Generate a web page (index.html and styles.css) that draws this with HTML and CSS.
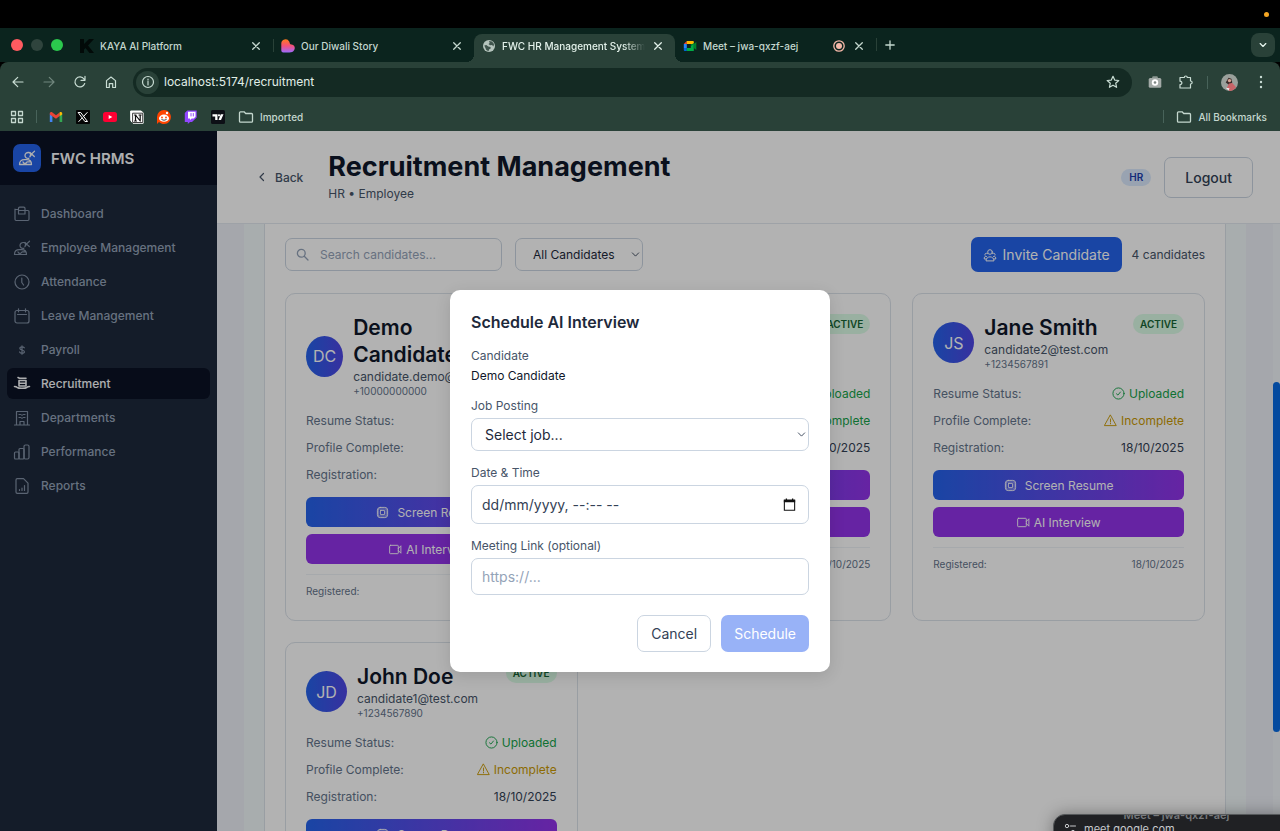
FILE: index.html
```html
<!DOCTYPE html>
<html lang="en-GB">
<head>
<meta charset="utf-8">
<title>FWC HR Management System</title>
<link rel="stylesheet" href="styles.css">
</head>
<body>
<svg class="defs" aria-hidden="true">
  <symbol id="close" viewBox="0 0 10 10"><path d="M1.7 1.7l6.6 6.6M8.3 1.7L1.7 8.3"/></symbol>
  <symbol id="folder" viewBox="0 0 16 16"><path d="M1.5 3.8c0-.7.4-1 1-1h3.6l1.6 1.7h5.8c.6 0 1 .4 1 1v6.7c0 .6-.4 1-1 1h-11c-.6 0-1-.4-1-1z"/></symbol>
  <symbol id="chev" viewBox="0 0 10 10"><path d="M1.5 3.2L5 6.8l3.5-3.6"/></symbol>
  <symbol id="person" viewBox="0 0 18 18"><path d="M1.500 15.500c0-3 1.800-4.800 5-4.800h2c3.200 0 5 1.800 5 4.800zM5 12.800c.3 1.500 1.200 1.700 2.500 1.500 1-.3 1-1.500 2-1.500h3.500M10.800 9.300c-2.300.3-3.800-1-3.800-2.800s1.500-3.200 3.700-3c1.800.3 2.300 1.800 1.500 3.200M12 3.500c1.300 1 2.500 2.500 4.300 4M16.500 2.200c-1.800 1.200-3 2.800-4.700 5.600"/></symbol>
  <symbol id="check" viewBox="0 0 14 14"><circle cx="7" cy="7" r="6"/><path d="M4.800 7.300l1.600 1.400 2.700-3.300"/></symbol>
  <symbol id="warn" viewBox="0 0 14 14"><path d="M7 1.300L13.200 12.500H.8zM7 5.400v3.200M7 10v.6"/></symbol>
  <symbol id="chip" viewBox="0 0 14 14"><rect x="1.500" y="1.500" width="11" height="11" rx="3"/><rect x="4.700" y="4.700" width="4.600" height="4.600" rx=".5"/><path d="M3 3.200h8v7.600H3z" opacity=".55"/></symbol>
  <symbol id="video" viewBox="0 0 14 14"><rect x=".7" y="2.500" width="9.300" height="9" rx=".8"/><path d="M10 6l2.800-3v8L10 8"/></symbol>
  <linearGradient id="heart" x1="0" y1="0" x2="0" y2="1"><stop offset="0" stop-color="#ff7a1a"/><stop offset=".5" stop-color="#f4507c"/><stop offset="1" stop-color="#9a6bff"/></linearGradient>
</svg>

<div class="menubar"><span class="mic-dot"></span></div>
<div class="tabstrip">
  <div class="lights"><i class="red"></i><i class="dim"></i><i class="green"></i></div>
  <div class="tab">
    <svg class="fav" viewBox="0 0 14 14"><path d="M0 0h4v5l5-5h5L8 6.500l6 7.500H9.500L5.500 9 4 10.500V14H0z" fill="#020a08"/></svg>
    <span class="tab-title">KAYA AI Platform</span>
    <button class="tab-x" aria-label="Close tab"><svg><use href="#close"/></svg></button>
  </div>
  <div class="tab sep">
    <svg class="fav" viewBox="0 0 14 14"><path d="M.3 4.500a4.200 4.200 0 0 1 7.900-2c.5.900.4 1.800 1 2.500.8.900 2 .3 3.200 1.200 1.600 1.200 1.700 3.200.8 4.800-1 1.800-2.700 2.500-4.700 2.500H2.300a2 2 0 0 1-2-2z" fill="url(#heart)"/></svg>
    <span class="tab-title">Our Diwali Story</span>
    <button class="tab-x" aria-label="Close tab"><svg><use href="#close"/></svg></button>
  </div>
  <div class="tab active">
    <svg class="fav" viewBox="0 0 14 14"><circle cx="7" cy="7" r="6" fill="#b5c4bd"/><path d="M2.300 6.500l2-.5 2 1.500 2.200.5.200 1.500-1.700 1-.5 1.700-2.200-1.200zM7 2l3 .5 2 2.500-.5 2.500-1.500-1.500-2 .3L6.500 5l1.200-1z" fill="#40554d"/></svg>
    <span class="tab-title">FWC HR Management System</span>
    <button class="tab-x" aria-label="Close tab"><svg><use href="#close"/></svg></button>
  </div>
  <div class="tab">
    <svg class="fav" viewBox="0 0 14 14"><path d="M.8 5l3-3v3z" fill="#ea4335"/><path d="M.8 5h3v4h-3z" fill="#2684fc"/><path d="M.8 9h3v3h-2a1 1 0 0 1-1-1z" fill="#0066da"/><path d="M3.800 9h4V7l3-3v8h-7z" fill="#00ac47"/><path d="M10.800 5l2.500-2v8l-2.500-2zM7.800 2h2a1 1 0 0 1 1 1v2L7.800 7z" fill="#00832d"/><path d="M3.800 2h6a1 1 0 0 1 1 1v1l-1.500 1H3.800z" fill="#ffba00"/></svg>
    <span class="tab-title">Meet – jwa-qxzf-aej</span>
    <svg class="rec" viewBox="0 0 14 14"><circle cx="7" cy="7" r="5.200"/><circle cx="7" cy="7" r="3" class="solid"/></svg>
    <button class="tab-x" aria-label="Close tab"><svg><use href="#close"/></svg></button>
  </div>
  <button class="newtab sep" aria-label="New tab"><svg viewBox="0 0 10 10"><path d="M5 .8v8.400M.8 5h8.400"/></svg></button>
  <button class="tabsearch" aria-label="Search tabs"><svg><use href="#chev"/></svg></button>
</div>

<div class="toolbar">
  <button class="tool" aria-label="Back"><svg viewBox="0 0 14 14"><path d="M12 7H2M6.700 2.300L2 7l4.700 4.700"/></svg></button>
  <button class="tool faded" aria-label="Forward"><svg viewBox="0 0 14 14"><path d="M2 7h10M7.300 2.300L12 7l-4.700 4.700"/></svg></button>
  <button class="tool" aria-label="Reload"><svg viewBox="0 0 14 14"><path d="M11.700 8.500A5 5 0 1 1 11 4l1 1.200M12 1.300v4H8"/></svg></button>
  <button class="tool" aria-label="Home"><svg viewBox="0 0 14 14"><path d="M2.500 12.500V5.600L7 2l4.500 3.600v6.900H8.700V8.600H5.300v3.900z"/></svg></button>
  <div class="omnibox">
    <span class="info"><svg viewBox="0 0 14 14"><circle cx="7" cy="7" r="5.500"/><path d="M7 6.300v3.600M7 4v1"/></svg></span>
    <input type="text" value="localhost:5174/recruitment" aria-label="Address">
    <button class="star" aria-label="Bookmark this tab"><svg viewBox="0 0 14 14"><path d="M7 1.300l1.700 3.800 4.100.4-3.100 2.700.9 4.100L7 10.200l-3.600 2.100.9-4.100L1.200 5.500l4.100-.4z"/></svg></button>
  </div>
  <button class="tool" aria-label="Screenshot"><svg viewBox="0 0 14 14" class="filled"><rect x="4.200" y="1.300" width="5.600" height="4" rx="1" fill="#8b9691"/><rect x=".7" y="3" width="12.600" height="9.700" rx="1.500" fill="#a3aaa7"/><circle cx="7" cy="7.500" r="3.200" fill="#fff"/><circle cx="7" cy="7.500" r="1.300" fill="#7d8683"/></svg></button>
  <button class="tool" aria-label="Extensions"><svg viewBox="0 0 14 14"><path d="M1 2.500h4.300c0-2 3-2 3 0h3.200V6c2.200 0 2.200 3 0 3v4H1V9.600c2.500 0 2.500-3.400 0-3.400z"/></svg></button>
  <i class="vline"></i>
  <button class="tool" aria-label="Profile"><svg class="filled avatar-pic" viewBox="0 0 18 18"><circle cx="9" cy="9" r="9" fill="#9aa09b"/><path d="M5 9l3-5 3 1 1 4-3 3z" fill="#3c2c2b"/><circle cx="9" cy="7" r="1.800" fill="#d7a594"/><path d="M6 15l2.500-5 3.500-.500 4 4.500a9 9 0 0 1-7 4z" fill="#c96468"/><path d="M5 14.500l4 .5-1 2.500z" fill="#eee"/></svg></button>
  <button class="tool" aria-label="Menu"><svg class="filled" viewBox="0 0 14 14"><g fill="#c9ddd4"><circle cx="7" cy="2" r="1.200"/><circle cx="7" cy="7" r="1.200"/><circle cx="7" cy="12" r="1.200"/></g></svg></button>
</div>

<div class="bookmarks">
  <svg class="line" viewBox="0 0 14 14"><path d="M1.500 1.500h4v4h-4zM8.500 1.500h4v4h-4zM1.500 8.500h4v4h-4zM8.500 8.500h4v4h-4z"/></svg>
  <i class="vline"></i>
  <svg viewBox="0 0 14 14"><path d="M.8 3.500V12h2.600V6z" fill="#4285f4"/><path d="M10.600 6v6h2.600V3.500z" fill="#34a853"/><path d="M.8 3.500C.8 2 2.500 1.600 3.400 2.400L7 5.200l3.600-2.800v3.500L7 8.700.8 4.500z" fill="#ea4335"/><path d="M10.600 2.400c1-.8 2.600-.4 2.600 1.100v1l-2.600 1.700z" fill="#fbbc04"/></svg>
  <svg viewBox="0 0 14 14"><rect width="14" height="14" rx="1" fill="#050505"/><path d="M2.500 2.500h2.200l6.800 9H9.300zM11.200 2.500L7.700 6.300M6.200 7.900l-3.400 3.600" fill="none" stroke="#fff"/></svg>
  <svg viewBox="0 0 14 14"><rect y="2" width="14" height="10" rx="2.500" fill="#ff0033"/><path d="M5.700 4.900v4.200L9.300 7z" fill="#fff"/></svg>
  <svg viewBox="0 0 14 14"><path d="M1 1h10l2.200 1.800v10.400H3L1 11z" fill="#fff" stroke="#fff" stroke-linejoin="round"/><path d="M3 3.200h9.700v9.300H3z" fill="#fff" stroke="#111" stroke-width=".8"/><path d="M5.500 11V5l4.700 6V5M4.500 5h1.500M4.500 11h2M9 5h2.200" fill="none" stroke="#111" stroke-width="1.200"/></svg>
  <svg viewBox="0 0 14 14"><path d="M7 0a7 7 0 1 1-5 12L0 14V7a7 7 0 0 1 7-7z" fill="#ff4500"/><ellipse cx="7" cy="8.200" rx="5" ry="3.600" fill="#fff"/><circle cx="10" cy="3" r="1.200" fill="#fff"/><circle cx="5" cy="7.500" r=".9" fill="#ff4500"/><circle cx="9" cy="7.500" r=".9" fill="#ff4500"/><path d="M4.800 9.700q2.200 1.300 4.400 0" fill="none" stroke="#222" stroke-width=".8"/></svg>
  <svg viewBox="0 0 14 14"><path d="M3.300.5L.8 3v9h3v2l2.200-2h2l4.700-4.500v-7z" fill="#9146ff"/><path d="M4 1.700h7.500v5L9.700 8.500h-2L6 10V8.500H4z" fill="#fff"/><path d="M7 3.500V6M9.300 3.500V6" stroke="#9146ff"/></svg>
  <svg viewBox="0 0 14 14"><rect width="14" height="14" rx="1.500" fill="#0d0f16"/><path d="M1.500 4.200h5V10H4.200V6.400H1.500zM9.800 4.200h2.700L10 10H7.500z" fill="#fff"/><circle cx="8" cy="5.300" r="1.100" fill="#fff"/></svg>
  <a href="#imported"><svg class="line folder"><use href="#folder"/></svg>Imported</a>
  <i class="vline push"></i>
  <a href="#all"><svg class="line folder"><use href="#folder"/></svg>All Bookmarks</a>
</div>

<div class="page">
  <aside class="sidebar">
    <div class="brand"><span class="logo"><svg><use href="#person"/></svg></span>FWC HRMS</div>
    <nav>
      <a href="#dashboard"><svg viewBox="0 0 18 18"><path d="M2 4.500h3M2 4v10.300c0 .7.500 1.200 1.200 1.200h11.600c.7 0 1.200-.5 1.200-1.200V6.700c0-.7-.5-1.200-1.200-1.200H12M5.500 3.500c0-.8.500-1.300 1.200-1.300h4c.7 0 1.300.5 1.300 1.300V9H5.500zM5.500 5.500H12"/></svg>Dashboard</a>
      <a href="#employees"><svg><use href="#person"/></svg>Employee Management</a>
      <a href="#attendance"><svg viewBox="0 0 18 18"><circle cx="9" cy="9" r="7"/><path d="M8.800 5v4.500l1.800 2.500"/></svg>Attendance</a>
      <a href="#leave"><svg viewBox="0 0 18 18"><rect x="2" y="3.500" width="14" height="12.500" rx="2"/><path d="M4.500 7.500h9M5.500 1.800v3M12.500 1.800v3"/></svg>Leave Management</a>
      <a href="#payroll"><svg viewBox="0 0 18 18"><path d="M11.300 6.800c-.5-.8-1.300-1-2.300-1-1.300 0-2.200.5-2.200 1.500 0 2.300 4.600 1.100 4.600 3.400 0 1-1 1.500-2.400 1.500-1.100 0-2-.4-2.400-1.200M9 4.800v8.400"/></svg>Payroll</a>
      <a href="#recruitment" class="current" aria-current="page"><svg viewBox="0 0 18 18"><path d="M1.500 11.500c1 0 1.800 0 2.500.8 1.500 1.300 8.500 1.300 10 0 .7-.8 1.500-.8 2.500-.8M6 11V5.500h7V11zM5 2.500l1.500.8H13M6 8.200h7"/></svg>Recruitment</a>
      <a href="#departments"><svg viewBox="0 0 18 18"><path d="M3.500 16V2.500h11V16M1.500 16h15M7 16v-3.500h4V16M6 5.500h1.500M10.500 5.500H12M6 8.500h1.500M10.500 8.500H12M9 5.500v1M9 8.500v1"/></svg>Departments</a>
      <a href="#performance"><svg viewBox="0 0 18 18"><rect x="1.500" y="9" width="4.500" height="7" rx="1"/><rect x="6" y="5.500" width="5" height="10.500" rx="1"/><rect x="11" y="2" width="5" height="14" rx="1.500"/></svg>Performance</a>
      <a href="#reports"><svg viewBox="0 0 18 18"><path d="M3 3c0-.8.500-1.300 1.300-1.300h6.200L15 6.200V15c0 .8-.5 1.300-1.300 1.300H4.300C3.500 16.300 3 15.800 3 15zM6.500 13.500v-1M9 13.500v-2.500M11.500 13.500V8.500"/></svg>Reports</a>
    </nav>
  </aside>

  <main>
    <header class="topbar">
      <button class="back"><svg viewBox="0 0 10 10"><path d="M6.500 1.500L3 5l3.500 3.500"/></svg>Back</button>
      <div class="heading"><h1>Recruitment Management</h1><p>HR • Employee</p></div>
      <span class="role">HR</span>
      <button class="logout">Logout</button>
    </header>
    <div class="scroller">
      <div class="backdrop"><div class="inner"><section class="panel">
        <div class="filters">
          <label class="search"><svg viewBox="0 0 14 14"><circle cx="5.700" cy="5.700" r="4.200"/><path d="M8.900 8.900l4 4"/></svg><input type="search" placeholder="Search candidates..." aria-label="Search candidates"></label>
          <div class="select small"><select aria-label="Filter candidates"><option>All Candidates</option></select><svg><use href="#chev"/></svg></div>
          <button class="invite"><svg viewBox="0 0 14 14"><circle cx="7" cy="4" r="2.300"/><path d="M3 12.500c0-5 8-5 8 0zM4.500 5.500c-2-1-3 .5-2.500 1.700M9.500 5.500c2-1 3 .5 2.500 1.700M3.500 8.500C1.500 8 1 9.500 1.300 11H3M10.500 8.500c2-.5 2.500 1 2.200 2.500H11"/></svg>Invite Candidate</button>
          <span class="count">4 candidates</span>
        </div>
        <div class="cards">
          <article class="card">
            <div class="who"><span class="initials">DC</span><div class="info-block"><h2>Demo Candidate</h2><p class="mail">candidate.demo@test.com</p><p class="phone">+10000000000</p></div><span class="badge">ACTIVE</span></div>
            <dl><div><dt>Resume Status:</dt><dd class="ok"><svg><use href="#check"/></svg>Uploaded</dd></div><div><dt>Profile Complete:</dt><dd class="ok">Complete</dd></div><div><dt>Registration:</dt><dd>18/10/2025</dd></div></dl>
            <button class="act screen"><svg><use href="#chip"/></svg>Screen Resume</button><button class="act ai"><svg><use href="#video"/></svg>AI Interview</button>
            <div class="foot"><span>Registered:</span><span>18/10/2025</span></div>
          </article>
          <article class="card">
            <div class="who"><span class="initials">C</span><div class="info-block"><h2>Candidate</h2><p class="mail">candidate3@test.com</p><p class="phone">+1234567892</p></div><span class="badge">ACTIVE</span></div>
            <dl><div><dt>Resume Status:</dt><dd class="ok"><svg><use href="#check"/></svg>Uploaded</dd></div><div><dt>Profile Complete:</dt><dd class="ok"><svg><use href="#check"/></svg>Complete</dd></div><div><dt>Registration:</dt><dd>18/10/2025</dd></div></dl>
            <button class="act screen"><svg><use href="#chip"/></svg>Screen Resume</button><button class="act ai"><svg><use href="#video"/></svg>AI Interview</button>
            <div class="foot"><span>Registered:</span><span>18/10/2025</span></div>
          </article>
          <article class="card">
            <div class="who"><span class="initials">JS</span><div class="info-block"><h2>Jane Smith</h2><p class="mail">candidate2@test.com</p><p class="phone">+1234567891</p></div><span class="badge">ACTIVE</span></div>
            <dl><div><dt>Resume Status:</dt><dd class="ok"><svg><use href="#check"/></svg>Uploaded</dd></div><div><dt>Profile Complete:</dt><dd class="todo"><svg><use href="#warn"/></svg>Incomplete</dd></div><div><dt>Registration:</dt><dd>18/10/2025</dd></div></dl>
            <button class="act screen"><svg><use href="#chip"/></svg>Screen Resume</button><button class="act ai"><svg><use href="#video"/></svg>AI Interview</button>
            <div class="foot"><span>Registered:</span><span>18/10/2025</span></div>
          </article>
          <article class="card">
            <div class="who"><span class="initials">JD</span><div class="info-block"><h2>John Doe</h2><p class="mail">candidate1@test.com</p><p class="phone">+1234567890</p></div><span class="badge">ACTIVE</span></div>
            <dl><div><dt>Resume Status:</dt><dd class="ok"><svg><use href="#check"/></svg>Uploaded</dd></div><div><dt>Profile Complete:</dt><dd class="todo"><svg><use href="#warn"/></svg>Incomplete</dd></div><div><dt>Registration:</dt><dd>18/10/2025</dd></div></dl>
            <button class="act screen"><svg><use href="#chip"/></svg>Screen Resume</button><button class="act ai"><svg><use href="#video"/></svg>AI Interview</button>
            <div class="foot"><span>Registered:</span><span>18/10/2025</span></div>
          </article>
        </div>
      </section></div></div>
      <div class="track"></div>
    </div>
  </main>

  <div class="overlay">
    <form class="modal" role="dialog" aria-labelledby="dlg">
      <h2 id="dlg">Schedule AI Interview</h2>
      <div class="cand"><p class="lbl">Candidate</p><p class="val">Demo Candidate</p></div>
      <div class="field"><label for="job">Job Posting</label><div class="select"><select id="job"><option>Select job...</option></select><svg><use href="#chev"/></svg></div></div>
      <div class="field"><label for="when">Date &amp; Time</label><div class="when"><input id="when" type="text" placeholder="dd/mm/yyyy, --:-- --"><button type="button" aria-label="Open calendar"><svg viewBox="0 0 14 14"><path d="M2.200 3.500h9.600v8.800H2.200z"/><path class="solid" d="M1.700 2.400h10.600v2.400H1.700zM3.500 1.300h1.200v2H3.500zM9.300 1.300h1.200v2H9.300z"/></svg></button></div></div>
      <div class="field"><label for="link">Meeting Link (optional)</label><input id="link" type="url" placeholder="https://..."></div>
      <div class="buttons"><button type="button" class="cancel">Cancel</button><button type="submit" class="submit" disabled>Schedule</button></div>
    </form>
  </div>
  <div class="track-over"><i></i></div>
</div>

<div class="popup">
  <p class="popup-title">Meet – jwa-qxzf-aej</p>
  <p class="popup-url"><svg viewBox="0 0 12 12"><circle cx="3" cy="3" r="1.700"/><path d="M6.500 3h5M.5 9h5"/><circle cx="9" cy="9" r="1.700"/></svg>meet.google.com</p>
</div>
</body>
</html>
```

FILE: styles.css
```css
* { box-sizing: border-box; }
body { margin: 0; height: 100vh; overflow: hidden; display: flex; flex-direction: column; position: relative; background: #000; font-family: Inter, "Liberation Sans", sans-serif; font-size: 12px; }
h1, h2, p, dl, dd { margin: 0; }
button, input, select { font: inherit; color: inherit; margin: 0; }
button { border: 0; padding: 0; background: none; display: flex; align-items: center; justify-content: center; }
a { color: inherit; text-decoration: none; }
svg { flex: none; fill: none; stroke: currentColor; stroke-linecap: round; stroke-linejoin: round; }
.defs { position: absolute; width: 0; height: 0; }

/* window frame */
.menubar { flex: none; height: 28px; display: flex; align-items: center; justify-content: flex-end; padding-right: 11px; }
.mic-dot { width: 5px; height: 5px; border-radius: 50%; background: #f5a623; }
.tabstrip { flex: none; height: 34px; background: linear-gradient(#0b241e, #0b241e); display: flex; align-items: center; color: #c4d7ce; font-size: 10px; font-weight: 500; }
.lights { width: 72px; flex: none; padding-left: 11px; display: flex; gap: 8px; }
.lights i { width: 12px; height: 12px; border-radius: 50%; }
.red { background: #ff5b60; }
.dim { background: #2f443d; }
.green { background: #2bc84d; }
.tab { position: relative; flex: 0 1 201px; min-width: 0; height: 28px; align-self: flex-end; display: flex; align-items: center; padding: 0 12px 5px 8px; }
.fav { width: 14px; height: 14px; stroke: none; margin-right: 6px; }
.tab-title { flex: 1; min-width: 0; overflow: hidden; white-space: nowrap; line-height: 18px; margin-right: 8px; }
.tab-x svg { width: 10px; height: 10px; stroke-width: 1.300; }
.active { background: #294138; border-radius: 8px 8px 0 0; color: #e3f1ea; }
.active::before, .active::after { content: ""; position: absolute; bottom: 0; width: 8px; height: 8px; }
.active::before { left: -8px; background: radial-gradient(circle at 0 0, transparent 8px, #294138 8px); }
.active::after { right: -8px; background: radial-gradient(circle at 100% 0, transparent 8px, #294138 8px); }
.active .tab-title { -webkit-mask-image: linear-gradient(90deg, #000 85%, transparent); mask-image: linear-gradient(90deg, #000 85%, transparent); }
.sep { background: linear-gradient(#294138, #294138) no-repeat 0 5px / 1px 13px; }
.rec { width: 14px; height: 14px; stroke: #f5b8a8; stroke-width: 1.300; margin-right: 8px; }
.rec .solid { fill: #f5b8a8; stroke: none; }
.newtab { width: 28px; height: 24px; }
.newtab svg { width: 10px; height: 10px; stroke-width: 1.300; }
.tabsearch { margin-left: auto; margin-right: 5px; width: 24px; height: 24px; border-radius: 8px; background: #294138; color: #e3f1ea; }
.tabsearch svg { width: 8px; height: 8px; stroke-width: 1.600; }
.toolbar { flex: none; height: 40px; background: #294138; border-radius: 8px 8px 0 0; box-shadow: 0 -8px 0 -0px transparent; display: flex; align-items: center; color: #c9ddd4; padding: 0 4px 0 2px; }
.tool { width: 31px; height: 28px; }
.tool svg { width: 14px; height: 14px; stroke-width: 1.200; }
.tool .filled { stroke: none; }
.tool .avatar-pic { width: 17px; height: 17px; }
.faded { color: #71877e; }
.omnibox { flex: 1; min-width: 0; height: 29px; margin: 0 7px; border-radius: 15px; background: #142a23; display: flex; align-items: center; padding: 0 12px 0 3px; }
.info { width: 23px; height: 23px; border-radius: 50%; background: #294138; display: flex; align-items: center; justify-content: center; }
.info svg, .star svg { width: 14px; height: 14px; stroke-width: 1.200; }
.omnibox input { flex: 1; min-width: 0; border: 0; padding: 0 4px 0 5px; background: none; color: #e0eee7; font-size: 12px; line-height: 18px; }
.vline { width: 1px; height: 13px; background: #48635a; margin: 0 6px; }
.bookmarks { flex: none; height: 29px; background: #294138; display: flex; align-items: center; gap: 13px; padding: 0 13px 0 10px; color: #c4d7ce; font-size: 10px; font-weight: 500; }
.bookmarks svg { width: 14px; height: 14px; stroke: none; }
.bookmarks .line { stroke: #c4d7ce; stroke-width: 1.300; }
.bookmarks a { display: flex; align-items: center; gap: 6px; line-height: 18px; }
.bookmarks .folder { width: 16px; height: 16px; }
.bookmarks .vline { margin: 0 -1px; }
.bookmarks .push { margin-left: auto; }

/* application */
.page { flex: 1; min-height: 0; position: relative; display: flex; overflow: hidden; background: #f1f5f9; }
.sidebar { flex: none; width: 217px; background: #1e293b; color: #94a3b8; }
.brand { height: 54px; background: #0b1224; color: #f8fafc; display: flex; align-items: center; gap: 10px; padding-left: 13px; font-size: 15px; font-weight: 600; }
.logo { width: 28px; height: 28px; border-radius: 7px; background: #2563eb; display: flex; align-items: center; justify-content: center; }
.logo svg { width: 18px; height: 18px; stroke-width: 1.300; }
nav { display: flex; flex-direction: column; gap: 3px; padding: 13px 7px; }
nav a { height: 31px; display: flex; align-items: center; gap: 10px; padding-left: 6px; border-radius: 6px; font-weight: 500; }
nav svg { width: 18px; height: 18px; stroke-width: 1.200; opacity: .85; }
.current { background: #0b1224; color: #f8fafc; }
.current svg { stroke-width: 1.600; opacity: 1; }
main { flex: 1; min-width: 0; display: flex; flex-direction: column; }
.topbar { flex: none; height: 93px; background: #fff; border-bottom: 1px solid #e2e8f0; display: flex; align-items: center; padding: 0 27px 0 40px; color: #334155; }
.back { gap: 8px; font-weight: 500; color: #475569; }
.back svg { width: 10px; height: 10px; stroke-width: 1.200; }
.heading { margin: 0 auto 0 25px; }
h1 { font-size: 27px; line-height: 34px; font-weight: 700; color: #0f172a; white-space: nowrap; }
.heading p { line-height: 20px; color: #475569; }
.role { padding: 0 8px; border-radius: 9px; background: #dbeafe; color: #1e40af; font-size: 10px; line-height: 17px; font-weight: 600; margin-right: 13px; }
.logout { height: 41px; padding: 0 20px; border: 1px solid #cbd5e1; border-radius: 7px; font-size: 14px; font-weight: 500; }
.scroller { flex: 1; min-height: 0; display: flex; overflow: hidden; }
.backdrop { flex: 1; min-width: 0; padding: 0 27px; background: #eceff7; }
.inner { padding: 0 20px; background: #f1f8f9; }
.panel { background: #fff; border: solid #dbe2ea; border-width: 0 1px; padding: 13px 20px 20px; }
.track { flex: none; width: 7px; background: #f1f5f9; }
.filters { display: flex; align-items: center; margin-bottom: 21px; height: 35px; color: #334155; }
.search { flex: 0 1 217px; min-width: 0; height: 33px; border: 1px solid #cbd5e1; border-radius: 7px; display: flex; align-items: center; padding: 0 10px; gap: 11px; color: #94a3b8; }
.search svg { width: 13px; height: 13px; stroke-width: 1.400; }
.search input { flex: 1; width: 0; min-width: 0; border: 0; padding: 0; background: none; outline: 0; }
input::placeholder { color: #94a3b8; opacity: 1; }
.select { position: relative; display: flex; align-items: center; }
.select select { width: 100%; height: 33px; appearance: none; background: #fff; border: 1px solid #cbd5e1; border-radius: 7px; padding: 0 24px 0 13px; color: #1e293b; }
.select svg { position: absolute; right: 3px; width: 9px; height: 9px; stroke: #334155; pointer-events: none; }
.small { margin-left: 13px; flex: 0 1 128px; }
.select.small select { padding: 0 17px; }
.invite { margin-left: auto; height: 35px; padding: 0 12px; gap: 6px; border-radius: 7px; background: #2563eb; color: #fff; font-size: 14px; }
.invite svg { width: 14px; height: 14px; }
.count { margin-left: 10px; color: #475569; white-space: nowrap; }
.cards { display: grid; grid-template-columns: repeat(3, minmax(0, 1fr)); gap: 21px; }
.card { border: 1px solid #dbe2ea; border-radius: 10px; padding: 20px; display: flex; flex-direction: column; }
.who { display: flex; align-items: flex-start; margin-bottom: 14px; }
.initials { flex: 0 1 41px; height: 41px; align-self: center; margin-right: 10px; border-radius: 50%; background: linear-gradient(90deg, #2563eb, #4f46e5); color: #fff; font-size: 16px; display: flex; align-items: center; justify-content: center; }
.info-block { flex: 0 1 auto; }
.card h2 { font-size: 21px; line-height: 27px; font-weight: 600; color: #0f172a; }
.mail { font-size: 12px; line-height: 17px; color: #475569; }
.phone { font-size: 10px; line-height: 13px; color: #64748b; }
.badge { margin-left: auto; flex: none; padding: 0 7px; border-radius: 10px; background: #dcfce7; color: #166534; font-size: 10px; line-height: 20px; font-weight: 600; }
dl { display: flex; flex-direction: column; gap: 10px; margin-bottom: 14px; line-height: 17px; color: #64748b; }
dl div { display: flex; justify-content: space-between; }
dd { display: flex; align-items: center; gap: 4px; color: #334155; }
dd svg { width: 13px; height: 13px; }
.ok { color: #16a34a; }
.todo { color: #ca9a04; }
.act { height: 30px; border-radius: 6px; color: #fff; gap: 4px; margin-bottom: 7px; }
.act svg { width: 13px; height: 13px; }
.screen { gap: 8px; background: linear-gradient(90deg, #2563eb, #9333ea); }
.ai { background: #9333ea; margin-bottom: 10px; }
.foot { border-top: 1px solid #eef2f6; padding-top: 8px; display: flex; justify-content: space-between; font-size: 10px; line-height: 17px; color: #64748b; }

/* dialog */
.overlay { position: absolute; inset: 0; background: rgba(0, 0, 0, .3); display: flex; align-items: center; justify-content: center; }
.modal { width: 380px; padding: 20px 21px; background: #fff; border-radius: 10px; box-shadow: 0 4px 16px rgba(0, 0, 0, .12); color: #334155; }
.modal h2 { font-size: 16px; line-height: 24px; font-weight: 600; color: #1e293b; margin-bottom: 12px; }
.cand { margin-bottom: 11px; }
.lbl, .val { font-size: 12px; line-height: 20px; }
.lbl { color: #475569; }
.val { color: #0f172a; }
.field { display: flex; flex-direction: column; gap: 3px; margin-bottom: 13px; }
.field label { font-size: 12px; line-height: 18px; color: #475569; }
.field input, .modal select { font-size: 14px; }
.when, .field > input { height: 37px; border: 1px solid #cbd5e1; border-radius: 7px; padding: 0 10px; background: #fff; }
.when { height: 39px; display: flex; align-items: center; padding-right: 11px; }
.when input { flex: 1; min-width: 0; border: 0; padding: 0; background: none; }
.when input::placeholder { color: #334155; }
.when svg { width: 15px; height: 15px; stroke: #111; stroke-linejoin: miter; }
.when .solid { fill: #111; stroke: none; }
.buttons { display: flex; justify-content: flex-end; gap: 10px; padding-top: 7px; }
.buttons button { height: 37px; padding: 0 13px; border-radius: 7px; font-size: 14px; }
.cancel { border: 1px solid #cbd5e1; }
.buttons .submit { background: #98b2f7; color: #fff; }

/* scroll thumb and second window */
.track-over { position: absolute; top: 92px; right: 0; bottom: 0; width: 7px; display: grid; grid-template-rows: 159fr 350fr 99fr; }
.track-over i { grid-row: 2; background: #044a9f; border-radius: 4px; }
.popup { position: absolute; left: 1053px; right: -40px; top: 814px; height: 40px; border-radius: 12px 12px 0 0; border: 1px solid #55585a; background: #202124; overflow: hidden; box-shadow: 0 0 16px rgba(0, 0, 0, .35); }
.popup p { line-height: 16px; }
.popup-title { margin-top: -8px; text-align: center; padding-right: 20px; color: #77797c; font-size: 11px; font-weight: 600; }
.popup-url { display: flex; gap: 8px; align-items: center; padding-left: 10px; color: #c7c9cc; font-size: 11px; margin-top: -2px; }
.popup-url svg { width: 12px; height: 12px; }
```
